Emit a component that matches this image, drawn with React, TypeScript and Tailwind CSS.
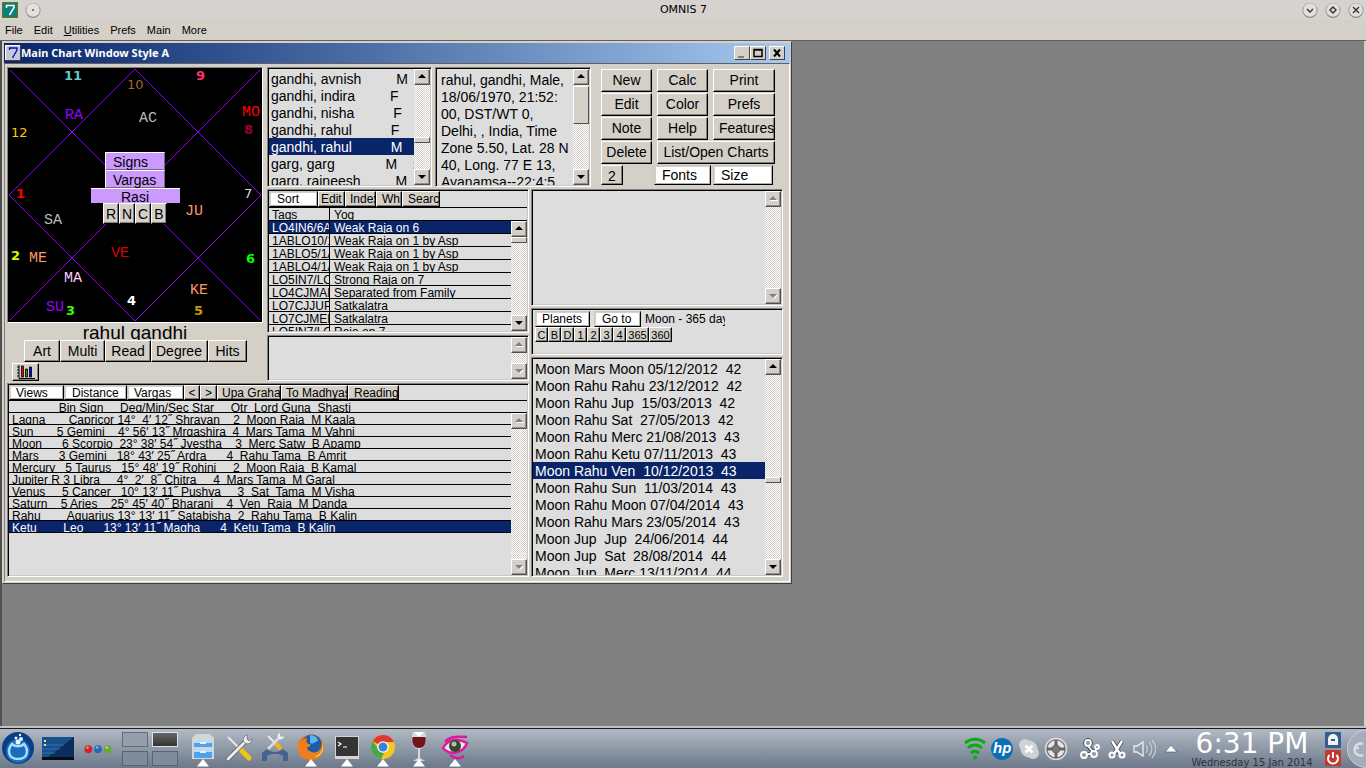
import { type ReactNode } from "react";
import { clsx } from "clsx";

const MENUS = ["File", "Edit", "Utilities", "Prefs", "Main", "More"];

const PEOPLE = [
  "gandhi, avnish         M",
  "gandhi, indira         F",
  "gandhi, nisha          F",
  "gandhi, rahul          F",
  "gandhi, rahul          M",
  "garg, garg             M    :",
  "garg, rajneesh         M"
];

const DETAILS = [
  "rahul, gandhi, Male,",
  "18/06/1970, 21:52:",
  "00, DST/WT 0,",
  "Delhi, , India, Time",
  "Zone 5.50, Lat. 28 N",
  "40, Long. 77 E 13,",
  "Ayanamsa--22:4:5"
];

const YOGAS = [
  ["LO4IN6/6A", "Weak Raja on 6"],
  ["1ABLO10/1", "Weak Raja on 1 by Asp"],
  ["1ABLO5/1A", "Weak Raja on 1 by Asp"],
  ["1ABLO4/1A", "Weak Raja on 1 by Asp"],
  ["LO5IN7/LO", "Strong Raja on 7"],
  ["LO4CJMAL", "Separated from Family"],
  ["LO7CJJUP", "Satkalatra"],
  ["LO7CJMER", "Satkalatra"],
  ["LO5IN7/LO", "Raja on 7"]
];

const PLANET_HEAD = "              Bin Sign     Deg/Min/Sec Star     Qtr  Lord Guna  Shasti";

const PLANETS = [
  "Lagna       Capricor 14°  4′ 12˝ Shravan    2  Moon Raja  M Kaala",
  "Sun       5 Gemini    4° 56′ 13˝ Mrgashira  4  Mars Tama  M Vahni",
  "Moon      6 Scorpio  23° 38′ 54˝ Jyestha    3  Merc Satw  B Apamp",
  "Mars      3 Gemini   18° 43′ 25˝ Ardra      4  Rahu Tama  B Amrit",
  "Mercury   5 Taurus   15° 48′ 19˝ Rohini     2  Moon Raja  B Kamal",
  "Jupiter R 3 Libra     4°  2′  8˝ Chitra     4  Mars Tama  M Garal",
  "Venus     5 Cancer   10° 13′ 11˝ Pushya     3  Sat  Tama  M Visha",
  "Saturn    5 Aries    25° 45′ 40˝ Bharani    4  Ven  Raja  M Danda",
  "Rahu        Aquarius 13° 13′ 11˝ Satabisha  2  Rahu Tama  B Kalin",
  "Ketu        Leo      13° 13′ 11˝ Magha      4  Ketu Tama  B Kalin"
];

const PERIODS = [
  "Moon Mars Moon 05/12/2012  42",
  "Moon Rahu Rahu 23/12/2012  42",
  "Moon Rahu Jup  15/03/2013  42",
  "Moon Rahu Sat  27/05/2013  42",
  "Moon Rahu Merc 21/08/2013  43",
  "Moon Rahu Ketu 07/11/2013  43",
  "Moon Rahu Ven  10/12/2013  43",
  "Moon Rahu Sun  11/03/2014  43",
  "Moon Rahu Moon 07/04/2014  43",
  "Moon Rahu Mars 23/05/2014  43",
  "Moon Jup  Jup  24/06/2014  44",
  "Moon Jup  Sat  28/08/2014  44",
  "Moon Jup  Merc 13/11/2014  44"
];

const HOUSES = [
  { n: "11", x: 56, y: 12, fill: "#5fc8c8", bold: true },
  { n: "10", x: 119, y: 21, fill: "#a0652a", bold: false },
  { n: "9", x: 188, y: 12, fill: "#ff3366", bold: true },
  { n: "12", x: 3, y: 69, fill: "#ffcc00", bold: false },
  { n: "8", x: 236, y: 66, fill: "#990033", bold: true },
  { n: "1", x: 8, y: 130, fill: "#ff0000", bold: true },
  { n: "7", x: 236, y: 130, fill: "#dddddd", bold: false },
  { n: "2", x: 3, y: 192, fill: "#ccff00", bold: true },
  { n: "6", x: 238, y: 195, fill: "#00ff00", bold: true },
  { n: "3", x: 58, y: 247, fill: "#33ff00", bold: true },
  { n: "4", x: 119, y: 237, fill: "#ffffff", bold: true },
  { n: "5", x: 186, y: 247, fill: "#cc9900", bold: true }
];

const GRAHAS = [
  { n: "RA", x: 57, y: 51, fill: "#9900ff" },
  { n: "AC", x: 131, y: 54, fill: "#bbbbbb" },
  { n: "MO", x: 234, y: 48, fill: "#ff0000" },
  { n: "SA", x: 36, y: 156, fill: "#bbbbbb" },
  { n: "JU", x: 177, y: 147, fill: "#ff9966" },
  { n: "ME", x: 21, y: 194, fill: "#ff9966" },
  { n: "VE", x: 103, y: 189, fill: "#dd0000" },
  { n: "MA", x: 56, y: 214, fill: "#ffccff" },
  { n: "SU", x: 38, y: 243, fill: "#9900ff" },
  { n: "KE", x: 182, y: 226, fill: "#ff9966" }
];

export default function App() {
  return (
    <div className="flex min-h-screen flex-col bg-[#808080] font-['Liberation_Sans',Arial,sans-serif] text-black">
      <TitleBar />
      <nav className="flex h-[21px] items-center gap-[11px] border-b border-[#606060] bg-[#d4d0c8] pl-[5px] text-[11px]">
        {MENUS.map((menu) => (
          <button key={menu} type="button" className="leading-5">
            {menu === "Utilities" ? (
              <>
                <span className="underline">U</span>tilities
              </>
            ) : (
              menu
            )}
          </button>
        ))}
      </nav>
      <main className="flex-1 border-r-2 border-l-2 border-r-[#d4d0c8] border-l-[#505050]">
        <ChartWindow />
      </main>
      <Taskbar />
    </div>
  );
}

function TitleBar() {
  return (
    <header className="flex h-5 items-center bg-[#d6d2d0] px-[2px]">
      <svg viewBox="0 0 16 16" className="h-4 w-4">
        <rect width="16" height="16" fill="#7a7000" />
        <rect x="1" y="1" width="14" height="14" fill="#0a7f7c" />
        <path d="M4.500 6V3.500H12v2L7.500 13" fill="none" stroke="#fff" strokeWidth="1.500" />
      </svg>
      <RoundButton label="Window menu" className="ml-[7px]">
        <circle cx="8" cy="8" r="1" fill="#555" />
      </RoundButton>
      <h1 className="flex-1 pl-6 text-center font-['DejaVu_Sans',sans-serif] text-[11px]">OMNIS 7</h1>
      <div className="flex gap-[7px]">
        <RoundButton label="Minimize">
          <path d="M5 7l3 3 3-3" fill="none" stroke="#333" strokeWidth="1.400" />
        </RoundButton>
        <RoundButton label="Restore">
          <path d="M8 5l3 3-3 3-3-3z" fill="none" stroke="#333" strokeWidth="1.400" />
        </RoundButton>
        <RoundButton label="Close">
          <path d="M5 5l6 6M11 5l-6 6" stroke="#333" strokeWidth="1.400" />
        </RoundButton>
      </div>
    </header>
  );
}

function RoundButton({ label, className, children }: { label: string; className?: string; children: ReactNode }) {
  return (
    <button type="button" aria-label={label} className={className}>
      <svg viewBox="0 0 16 16" className="h-4 w-4">
        <circle cx="8" cy="8.500" r="7.500" fill="#8a8785" />
        <circle cx="8" cy="8" r="6.800" fill="#e2dfdd" />
        {children}
      </svg>
    </button>
  );
}

function ChartWindow() {
  return (
    <section className="w-[790px] border border-t-[#d4d0c8] border-r-[#404040] border-b-[#404040] border-l-[#d4d0c8] bg-[#d4d0c8] p-px">
      <div className="flex h-5 items-center bg-linear-to-r from-[#0a246a] to-[#a6caf0] pr-[5px] pl-px">
        <svg viewBox="0 0 16 16" className="h-4 w-4">
          <rect width="16" height="16" fill="#404040" />
          <rect width="15" height="15" fill="#fff" />
          <rect x="1" y="1" width="14" height="14" fill="#c8c8d0" />
          <path d="M4.500 5V3H12v2L7.500 13" fill="none" stroke="#0000dd" strokeWidth="1.300" />
        </svg>
        <h2 className="flex-1 font-['Noto_Sans',sans-serif] text-[11px] font-bold text-white">Main Chart Window Style A</h2>
        <CaptionButton label="Minimize">
          <path d="M3 9h6v2H3z" fill="#808080" />
        </CaptionButton>
        <CaptionButton label="Maximize">
          <path d="M3 2.500h8v7H3zM3 3h8" fill="none" stroke="#000" strokeWidth="1.500" />
        </CaptionButton>
        <CaptionButton label="Close" className="ml-[3px]">
          <path d="M4 2.500l6 7M10 2.500l-6 7" stroke="#000" strokeWidth="2" />
        </CaptionButton>
      </div>
      <div className="border border-t-[#606060] border-r-white border-b-white border-l-[#808080] pt-[3px] pb-1 pl-[2px]">
        <div className="grid grid-cols-[258px_166px_94px_60px_190px] grid-rows-[120px_192px_194px] gap-[2px]">
          <div className="row-span-2 pr-[2px]">
            <BirthChart />
          </div>
          <Panel className="mr-px flex">
            <ListBox label="People" rows={PEOPLE} selected={4} />
            <ScrollBar thumb="mt-[52px] h-[6px]" />
          </Panel>
          <Panel className="col-span-2 flex">
            <div className="min-w-0 flex-1 overflow-hidden pt-[3px] pl-[4px] text-[14px] leading-[17px] whitespace-pre">
              {DETAILS.map((line) => (
                <div key={line}>{line}</div>
              ))}
            </div>
            <ScrollBar thumb="mt-px h-[38px]" />
          </Panel>
          <Commands />
          <div className="col-span-2 flex flex-col gap-[2px]">
            <YogaTable />
            <Panel className="flex h-[46px] justify-end">
              <ScrollBar disabled />
            </Panel>
          </div>
          <div className="col-span-2 row-span-2 flex flex-col gap-[2px]">
            <Panel className="flex h-[117px] justify-end">
              <ScrollBar disabled />
            </Panel>
            <PeriodControls />
            <Panel className="flex min-h-0 flex-1">
              <ListBox label="Periods" rows={PERIODS} selected={6} />
              <ScrollBar thumb="mt-[102px] h-[6px]" />
            </Panel>
          </div>
          <PlanetTable />
        </div>
      </div>
    </section>
  );
}

function CaptionButton({ label, className, children }: { label: string; className?: string; children: ReactNode }) {
  return (
    <button
      type="button"
      aria-label={label}
      className={clsx(
        "h-[14px] w-4 border border-t-white border-r-[#404040] border-b-[#404040] border-l-white bg-[#d4d0c8]",
        className
      )}
    >
      <svg viewBox="0 0 14 12" className="h-3 w-[14px]">
        {children}
      </svg>
    </button>
  );
}

function Panel({ className, children }: { className?: string; children?: ReactNode }) {
  return (
    <div
      className={clsx(
        "border border-t-[#808080] border-r-white border-b-white border-l-[#808080] bg-[#dddddd] p-px",
        "shadow-[inset_1px_1px_0_#000,inset_-1px_-1px_0_#c8c8c8]",
        className
      )}
    >
      {children}
    </div>
  );
}

function ListBox({ label, rows, selected }: { label: string; rows: string[]; selected: number }) {
  return (
    <ul aria-label={label} className="min-w-0 flex-1 overflow-hidden pt-px text-[14px] leading-[19px] whitespace-pre">
      {rows.map((row, i) => (
        <li key={i} className={clsx("h-[17px] pl-[2px]", i === selected && "bg-[#0a246a] text-white")}>
          {row}
        </li>
      ))}
    </ul>
  );
}

function ScrollBar({ thumb, disabled }: { thumb?: string; disabled?: boolean }) {
  return (
    <div className="flex w-4 shrink-0 flex-col bg-[repeating-conic-gradient(#fff_0_25%,#d4d0c8_0_50%)] bg-[length:2px_2px]">
      <ScrollArrow label="Scroll up" d="M3 8l4-4 4 4z" disabled={disabled} />
      <div className="min-h-0 flex-1">
        {thumb && (
          <div
            className={clsx(
              "border border-t-white border-r-[#505050] border-b-[#505050] border-l-white bg-[#d4d0c8]",
              thumb
            )}
          />
        )}
      </div>
      <ScrollArrow label="Scroll down" d="M3 5l4 4 4-4z" disabled={disabled} />
    </div>
  );
}

function ScrollArrow({ label, d, disabled }: { label: string; d: string; disabled?: boolean }) {
  return (
    <button
      type="button"
      aria-label={label}
      disabled={disabled}
      className="h-4 w-4 shrink-0 border border-t-white border-r-[#505050] border-b-[#505050] border-l-white bg-[#d4d0c8] shadow-[inset_-1px_-1px_0_#909090]"
    >
      <svg viewBox="0 0 14 14" className="h-[14px] w-[14px]">
        {disabled && <path d={d} fill="#fff" transform="translate(1 1)" />}
        <path d={d} fill={disabled ? "#808080" : "#000"} />
      </svg>
    </button>
  );
}

// Raised grey button; children are clipped at its edge like the native control.
function Button({ className, children }: { className?: string; children: ReactNode }) {
  return (
    <button
      type="button"
      className={clsx(
        "overflow-hidden border border-t-white border-r-black border-b-black border-l-white bg-[#d4d0c8]",
        "whitespace-nowrap shadow-[inset_-1px_-1px_0_#808080]",
        className
      )}
    >
      {children}
    </button>
  );
}

function PopupButton({ className, children }: { className?: string; children: ReactNode }) {
  return (
    <button
      type="button"
      aria-haspopup="menu"
      className={clsx(
        "overflow-hidden border border-t-[#c8c8c8] border-r-black border-b-black border-l-[#c8c8c8] bg-white text-left",
        "whitespace-nowrap shadow-[inset_1px_1px_0_#d4d0c8,inset_-1px_-1px_0_#b0b0b0]",
        className
      )}
    >
      {children}
    </button>
  );
}

function BirthChart() {
  return (
    <>
      <div className="relative border border-t-[#808080] border-r-white border-b-white border-l-[#808080] bg-black">
        <svg viewBox="0 0 254 254" className="block h-[254px] w-full">
          <g fill="none" stroke="#9100ff" shapeRendering="crispEdges">
            <path d="M2 2l250 250M252 2L2 252" />
            <path d="M127 1l126 126-126 126L1 127z" />
          </g>
          <g fontFamily="DejaVu Sans" fontSize="13">
            {HOUSES.map((h) => (
              <text key={h.n} x={h.x} y={h.y} fill={h.fill} fontWeight={h.bold ? 700 : 400}>
                {h.n}
              </text>
            ))}
          </g>
          <g fontFamily="Liberation Mono" fontSize="15">
            {GRAHAS.map((g) => (
              <text key={g.n} x={g.x} y={g.y} fill={g.fill}>
                {g.n}
              </text>
            ))}
          </g>
        </svg>
        <div className="absolute inset-x-0 top-[84px] flex flex-col items-center text-[14px]">
          <button
            type="button"
            className="h-[18px] w-[60px] border border-t-white border-r-[#707070] border-b-[#707070] border-l-white bg-[#cc99ff] pl-[7px] text-left leading-[18px]"
          >
            Signs
          </button>
          <button
            type="button"
            className="h-[18px] w-[60px] border border-t-white border-r-[#707070] border-b-[#707070] border-l-white bg-[#cc99ff] pl-[7px] text-left leading-[18px]"
          >
            Vargas
          </button>
          <div className="h-[15px] w-[89px] overflow-hidden border-t border-white bg-[#cc99ff] text-center leading-[17px]">Rasi</div>
          <div className="flex">
            {["R", "N", "C", "B"].map((key) => (
              <Button key={key} className="h-[21px] w-4">
                {key}
              </Button>
            ))}
          </div>
        </div>
      </div>
      <div className="h-[17px] overflow-hidden text-center text-[19px] leading-[19px]">rahul gandhi</div>
      <div className="flex pl-[17px] text-[14px]">
        <Button className="h-[22px] w-9">Art</Button>
        <Button className="h-[22px] w-[45px]">Multi</Button>
        <Button className="h-[22px] w-[46px]">Read</Button>
        <Button className="h-[22px] w-[57px] pl-1 text-left">Degree</Button>
        <Button className="h-[22px] w-[39px]">Hits</Button>
      </div>
      <div className="flex pt-px pl-[5px]">
        <button
          type="button"
          aria-label="Graph"
          className="h-[18px] w-[27px] border border-t-white border-r-black border-b-black border-l-white bg-[#d4d0c8] shadow-[inset_-1px_-1px_0_#808080]"
        >
          <svg viewBox="0 0 20 14" className="mx-auto h-[14px] w-5">
            <path d="M3 0v13.500h16M1 2h2M1 5h2M1 8h2M1 11h2" fill="none" stroke="#000" />
            <path d="M5.500 1h2v11h-2z" fill="#f00" stroke="#000" strokeWidth="0.800" />
            <path d="M9.500 4h2v8h-2z" fill="#0a0" stroke="#000" strokeWidth="0.800" />
            <path d="M13.500 2h2v10h-2z" fill="#00f" stroke="#000" strokeWidth="0.800" />
          </svg>
        </button>
      </div>
    </>
  );
}

function Commands() {
  return (
    <div className="flex flex-col gap-px px-2 pt-[2px] text-[14px]">
      <div className="grid grid-cols-[51px_51px_62px] gap-x-[5px] gap-y-px">
        <Button className="h-[23px]">New</Button>
        <Button className="h-[23px]">Calc</Button>
        <Button className="h-[23px]">Print</Button>
        <Button className="h-[23px]">Edit</Button>
        <Button className="h-[23px]">Color</Button>
        <Button className="h-[23px]">Prefs</Button>
        <Button className="h-[23px]">Note</Button>
        <Button className="h-[23px]">Help</Button>
        <Button className="h-[23px] pl-[5px] text-left">Features</Button>
        <Button className="h-[23px]">Delete</Button>
        <Button className="col-span-2 h-[23px]">List/Open Charts</Button>
      </div>
      <div className="flex items-end gap-[2px] pr-[2px]">
        <Button className="mr-auto h-5 w-[22px]">2</Button>
        <PopupButton className="h-5 w-[57px] pl-[7px] leading-[19px]">Fonts</PopupButton>
        <PopupButton className="h-5 w-[60px] pl-[7px] leading-[19px]">Size</PopupButton>
      </div>
    </div>
  );
}

function YogaTable() {
  return (
    <Panel className="flex h-[144px] flex-col text-[12px]">
      <div className="flex h-[17px] shrink-0 border-b border-black leading-[15px]">
        <PopupButton className="w-[49px] pl-[7px]">Sort</PopupButton>
        <Button className="w-[27px] pl-[2px] text-left">Edit</Button>
        <Button className="w-[31px] pl-1 text-left">Index</Button>
        <Button className="w-[26px] pl-[5px] text-left">Wh</Button>
        <Button className="w-[38px] pl-[5px] text-left">Search</Button>
      </div>
      <div className="flex min-h-0 flex-1 overflow-hidden">
        <div className="min-w-0 flex-1 overflow-hidden">
          <table className="w-full table-fixed border-separate border-spacing-0 text-left leading-[14px] whitespace-nowrap">
            <thead>
              <tr>
                <th className="w-[61px] border-r border-b border-black p-0 font-normal">
                  <div className="h-3 overflow-hidden pl-[3px]">Tags</div>
                </th>
                <th className="border-b border-black p-0 font-normal">
                  <div className="h-3 overflow-hidden pl-1">Yog</div>
                </th>
              </tr>
            </thead>
            <tbody>
              {YOGAS.map(([tag, name], i) => (
                <tr key={i} className={clsx(i === 0 && "bg-[#0a246a] text-white")}>
                  <td className="border-r border-b border-black p-0">
                    <div className="h-3 overflow-hidden pl-[3px]">{tag}</div>
                  </td>
                  <td className="border-b border-black p-0">
                    <div className="h-3 overflow-hidden pl-1">{name}</div>
                  </td>
                </tr>
              ))}
            </tbody>
          </table>
        </div>
        <div className="flex w-4 flex-col">
          <div className="h-[13px] shrink-0 border-b border-black" />
          <div className="flex min-h-0 flex-1">
            <ScrollBar thumb="h-[6px]" />
          </div>
        </div>
      </div>
    </Panel>
  );
}

function PlanetTable() {
  return (
    <Panel className="col-span-3 flex flex-col text-[12px]">
      <div className="flex h-4 shrink-0 border-b border-black leading-[14px]">
        <PopupButton className="w-[55px] pl-[6px]">Views</PopupButton>
        <PopupButton className="w-[63px] pl-[7px]">Distance</PopupButton>
        <PopupButton className="w-[57px] pl-[6px]">Vargas</PopupButton>
        <Button className="w-4">&lt;</Button>
        <Button className="w-[17px]">&gt;</Button>
        <Button className="w-16 pl-1 text-left">Upa Grahas</Button>
        <Button className="w-[67px] pl-1 text-left">To Madhyas</Button>
        <Button className="w-[51px] pl-[5px] text-left">Readings</Button>
      </div>
      <div className="flex min-h-0 flex-1">
        <div className="min-w-0 flex-1 overflow-hidden">
          <table className="w-full table-fixed border-separate border-spacing-0 text-left leading-[14px] whitespace-pre">
            <thead>
              <tr>
                <th className="border-b border-black p-0 font-normal">
                  <div className="h-[11px] overflow-hidden pl-[3px]">{PLANET_HEAD}</div>
                </th>
              </tr>
            </thead>
            <tbody>
              {PLANETS.map((row, i) => (
                <tr key={i} className={clsx(i === PLANETS.length - 1 && "bg-[#0a246a] text-white")}>
                  <td className="border-b border-black p-0">
                    <div className="h-[11px] overflow-hidden pl-[3px]">{row}</div>
                  </td>
                </tr>
              ))}
            </tbody>
          </table>
        </div>
        <div className="flex w-4 flex-col">
          <div className="h-3 shrink-0 border-b border-black" />
          <div className="flex min-h-0 flex-1">
            <ScrollBar disabled />
          </div>
        </div>
      </div>
    </Panel>
  );
}

function PeriodControls() {
  return (
    <Panel className="h-[47px] pt-[2px] pl-[3px] text-[12px]">
      <div className="flex h-4 gap-1 leading-[15px]">
        <PopupButton className="w-[55px] pl-[6px]">Planets</PopupButton>
        <PopupButton className="w-[47px] pl-[7px]">Go to</PopupButton>
        <div className="w-20 overflow-hidden leading-[17px] whitespace-nowrap">Moon - 365 days</div>
      </div>
      <div className="flex text-[11px] leading-[15px]">
        {["C", "B", "D", "1", "2", "3", "4"].map((key) => (
          <Button key={key} className="h-[15px] w-[13px]">
            {key}
          </Button>
        ))}
        <Button className="h-[15px] w-[23px]">365</Button>
        <Button className="h-[15px] w-[23px]">360</Button>
      </div>
    </Panel>
  );
}

function Taskbar() {
  return (
    <footer className="border-t-2 border-[#c4c0b8]">
      <div className="flex h-10 items-center border-t border-[#101c30] bg-linear-to-b from-[#b2bac4] to-[#6c798a] pl-[2px]">
        <Launcher label="Menu" className="w-8">
          <circle cx="16" cy="17" r="16" fill="#0b3f83" />
          <circle cx="16" cy="20" r="12" fill="#1b6cb8" />
          <path d="M10 13c-5 6-4 15 6 15s11-9 6-15c-3 3-9 3-12 0z" fill="none" stroke="#a9dcff" strokeWidth="2.500" />
          <g fill="#e8f8ff">
            <circle cx="16" cy="11" r="2.500" />
            <circle cx="19" cy="8" r="2" />
            <circle cx="14" cy="7" r="1.500" />
            <circle cx="18" cy="4" r="1.200" />
          </g>
        </Launcher>
        <Launcher label="Show desktop" className="ml-2 w-8">
          <path d="M0 6h32v23H0z" fill="#17508a" />
          <path d="M32 6v20H6z" fill="#0b2c5c" />
          <path d="M0 14h22M0 18h18M0 22h13" stroke="#3d7cb4" strokeWidth="0.700" />
          <path d="M0 26h32v3H0z" fill="#0a0d14" />
          <path d="M2 9h2v2H2zM2 13h2v2H2z" fill="#e8e0a0" />
        </Launcher>
        <Launcher label="Activities" className="ml-[10px] w-7">
          <circle cx="5" cy="18.500" r="4.500" fill="#d3202a" />
          <circle cx="16" cy="18.500" r="4.500" fill="#2869b8" />
          <circle cx="27" cy="18.500" r="4.500" fill="#6ba82a" />
          <g fill="#fff" opacity="0.500">
            <circle cx="4" cy="16.500" r="1.500" />
            <circle cx="15" cy="16.500" r="1.500" />
            <circle cx="26" cy="16.500" r="1.500" />
          </g>
        </Launcher>
        <div className="ml-[10px] grid grid-cols-[26px_26px] gap-1">
          <button type="button" aria-label="Desktop 1" className="h-[15px] border border-[#626d7c] bg-[#959fac]" />
          <button type="button" aria-label="Desktop 2" className="h-[15px] border border-[#e0e0e0] bg-linear-to-b from-[#686868] to-[#333]" />
          <button type="button" aria-label="Desktop 3" className="h-[15px] border border-[#586473] bg-[#808c9b]" />
          <button type="button" aria-label="Desktop 4" className="h-[15px] border border-[#586473] bg-[#808c9b]" />
        </div>
        <Launcher label="Files" className="ml-[9px] w-8" running>
          <path d="M5 7l4-4h14l4 4v21H5z" fill="#d3d6d3" />
          <path d="M7 9h18v7H7zM7 18h18v9H7z" fill="#4ba3ee" />
          <path d="M7 9h18v3H7zM7 18h18v3H7z" fill="#b5dcfa" />
          <path d="M13 11h6v2h-6zM13 20h6v2h-6z" fill="#eee" />
        </Launcher>
        <Launcher label="Settings" className="ml-[4px] w-8">
          <path d="M16 17l10 10" stroke="#f3c40f" strokeWidth="5" strokeLinecap="round" />
          <path d="M5 6l12 12" stroke="#e9e9e9" strokeWidth="2" />
          <path d="M5 28L22 11" stroke="#555" strokeWidth="4.500" strokeLinecap="round" />
          <path d="M5 28L22 11" stroke="#eee" strokeWidth="3" strokeLinecap="round" />
          <path d="M24 4c-4 1-5 6-2 8s7 0 7-4l-3 2-2-2z" fill="#eee" stroke="#666" strokeWidth="0.700" />
        </Launcher>
        <Launcher label="Tools" className="ml-[4px] w-8">
          <path d="M3 30v-8l5-4c5 4 11 4 16 0l5 4v8h-5v-5c-5-3-11-3-16 0v5z" fill="#456391" />
          <path d="M9 5l7 7" stroke="#e9e9e9" strokeWidth="2" />
          <path d="M16 12l6 6" stroke="#f3b31a" strokeWidth="4" />
          <path d="M9 18L20 7" stroke="#ddd" strokeWidth="2.500" />
          <path d="M21 2c-3 1-3 5-1 6s5 0 5-3l-2 1-2-1z" fill="#eee" />
        </Launcher>
        <Launcher label="Firefox" className="ml-[4px] w-8" running>
          <circle cx="16" cy="16" r="12.500" fill="#e2661a" />
          <circle cx="17" cy="13" r="9.500" fill="#1f5ca8" />
          <path d="M15 4c5 0 8 3 8 6-3 0-4 4-8 2z" fill="#58b6e8" />
          <path d="M5 7c-6 12 0 22 11 22 9 0 14-8 12-17-1 7-6 11-11 9-4-1-5-3-5-5 3 0 4-2 3-3-4 0-4-3-3-6-3 0-4 2-5 3z" fill="#ef7e1e" />
          <path d="M27 10c2 9-2 15-9 16 7 1 13-6 9-16z" fill="#ffd24a" />
        </Launcher>
        <Launcher label="Terminal" className="ml-[4px] w-8" running>
          <path d="M4 5h24v23H4z" fill="#d5d5d3" />
          <path d="M5 6h22v19H5z" fill="#343434" />
          <path d="M7 11l3 2-3 2M12 16h4" fill="none" stroke="#fff" strokeWidth="1.200" />
        </Launcher>
        <Launcher label="Chrome" className="ml-[4px] w-8" running>
          <circle cx="16" cy="16" r="12" fill="#f6c71d" />
          <path d="M5.600 10A12 12 0 0 1 27 11H16v5z" fill="#dd3b2f" />
          <path d="M5.600 10L12 19l5 3-3 6A12 12 0 0 1 5.600 10z" fill="#4aa84a" />
          <circle cx="16" cy="16" r="5.800" fill="#fff" />
          <circle cx="16" cy="16" r="4.500" fill="#3c7fd6" />
        </Launcher>
        <Launcher label="Wine" className="ml-[4px] w-8" running>
          <path d="M10 1h12c3 10 0 16-5 17v9l5 3H10l5-3v-9C10 17 7 11 10 1z" fill="#d9d9dd" />
          <path d="M9.500 6h13c1 6-1 11-6.500 11S8.500 12 9.500 6z" fill="#6e1520" />
          <path d="M11 1h10l-5 5z" fill="#fff" />
        </Launcher>
        <Launcher label="Okular" className="ml-[4px] w-8" running>
          <path d="M4 17C9 8 19 7 28 12c-3 9-16 14-24 5z" fill="#f0e8ee" stroke="#d91c9c" strokeWidth="2.500" />
          <circle cx="16" cy="15" r="6" fill="#38442e" />
          <circle cx="15" cy="13" r="2.500" fill="#b2c497" />
          <path d="M6 11C12 4 20 6 28 6M11 24c5 4 10 4 14 1" fill="none" stroke="#d91c9c" strokeWidth="2.500" />
        </Launcher>
        <Tray />
      </div>
    </footer>
  );
}

function Launcher({
  label,
  className,
  running,
  children
}: {
  label: string;
  className: string;
  running?: boolean;
  children: ReactNode;
}) {
  return (
    <button type="button" aria-label={label} className={clsx("shrink-0", className)}>
      <svg viewBox="0 0 32 36" className="block w-full">
        {children}
        {running && <path d="M16 28l6 7.500H10z" fill="#fff" />}
      </svg>
    </button>
  );
}

function TrayIcon({ label, children }: { label: string; children: ReactNode }) {
  return (
    <button type="button" aria-label={label} className="w-6 shrink-0">
      <svg viewBox="0 0 24 24" className="block w-full">
        {children}
      </svg>
    </button>
  );
}

function Tray() {
  return (
    <div className="ml-auto flex items-center">
      <div className="flex items-center gap-[3px]">
        <TrayIcon label="Wireless">
          <path d="M2 6c6-5 14-5 20 0M5 11c4-4 10-4 14 0M8 16c3-2.500 5-2.500 8 0" fill="none" stroke="#0caa13" strokeWidth="3" />
          <circle cx="12" cy="20.500" r="2" fill="#0caa13" />
        </TrayIcon>
        <TrayIcon label="Printer">
          <circle cx="12" cy="12" r="11" fill="#0970b8" />
          <text x="3" y="16" fontFamily="Liberation Sans" fontSize="15" fontStyle="italic" fontWeight="700" fill="#fff">
            hp
          </text>
        </TrayIcon>
        <TrayIcon label="Skype">
          <circle cx="8" cy="8" r="6" fill="#cfd2d4" />
          <circle cx="16" cy="16" r="6" fill="#cfd2d4" />
          <circle cx="12" cy="12" r="8.500" fill="#cfd2d4" />
          <path d="M8.500 8.500l7 7M15.500 8.500l-7 7" stroke="#fff" strokeWidth="2.500" />
        </TrayIcon>
        <TrayIcon label="Network">
          <circle cx="12" cy="12" r="10.500" fill="#777" stroke="#ddd" strokeWidth="1.500" />
          <circle cx="12" cy="12" r="6.500" fill="none" stroke="#e8e8e8" strokeWidth="4" />
          <path d="M12 3v6M12 15v6M3 12h6M15 12h6" stroke="#666" strokeWidth="3" />
        </TrayIcon>
        <div className="w-1" />
        <TrayIcon label="Nepomuk">
          <g fill="none" stroke="#333b45" strokeWidth="3.500">
            <circle cx="10" cy="6" r="3" />
            <path d="M10 9l6 7-9 2M16 16l3-5" />
          </g>
          <g fill="#8e99a6" stroke="#fff" strokeWidth="1.800">
            <path d="M10 9l6 7-9 2M16 16l3-5" fill="none" />
            <circle cx="10" cy="6" r="3" />
            <circle cx="6" cy="18" r="3" />
            <circle cx="16" cy="17" r="3" />
            <circle cx="19" cy="10" r="2" />
          </g>
        </TrayIcon>
        <TrayIcon label="Clipboard">
          <path d="M7 4l8 13M17 4L9 17" stroke="#39424d" strokeWidth="4" />
          <path d="M7 4l8 13M17 4L9 17" stroke="#fff" strokeWidth="2.500" />
          <circle cx="7" cy="18" r="2.500" fill="none" stroke="#fff" strokeWidth="2" />
          <circle cx="17" cy="18" r="2.500" fill="none" stroke="#fff" strokeWidth="2" />
        </TrayIcon>
        <TrayIcon label="Volume">
          <path d="M2 9h3l6-4v14l-6-4H2z" fill="none" stroke="#eee" strokeWidth="1.300" />
          <path d="M14 8c2 3 2 5 0 8M17 5c4 5 4 9 0 14M20 3c5 6 5 12 0 18" fill="none" stroke="#c3c9d0" strokeWidth="1.300" />
        </TrayIcon>
        <TrayIcon label="Show hidden icons">
          <path d="M6 15l6-7 6 7z" fill="#fff" stroke="#525d6a" strokeWidth="0.700" />
        </TrayIcon>
      </div>
      <div className="ml-2 flex w-[122px] flex-col items-center font-['DejaVu_Sans',sans-serif] whitespace-nowrap">
        <div className="text-[28px] leading-[28px] text-white">6:31 PM</div>
        <div className="text-[10px] leading-[10px] text-[#2c333b]">Wednesday 15 Jan 2014</div>
      </div>
      <div className="ml-3 flex flex-col gap-[2px]">
        <button type="button" aria-label="Lock screen">
          <svg viewBox="0 0 16 16" className="block h-4 w-4">
            <rect width="16" height="16" rx="1" fill="#345c91" />
            <path d="M3 13V7a5 5 0 0 1 10 0v6z" fill="#f2f2f2" />
            <path d="M6 7h4v2H6z" fill="#345c91" />
          </svg>
        </button>
        <button type="button" aria-label="Shut down">
          <svg viewBox="0 0 16 16" className="block h-4 w-4">
            <rect width="16" height="16" rx="1" fill="#c7372d" />
            <path d="M4.500 5a5 5 0 1 0 7 0M8 2v6" fill="none" stroke="#fff" strokeWidth="2" />
          </svg>
        </button>
      </div>
      <button type="button" aria-label="Panel toolbox" className="ml-[5px]">
        <svg viewBox="0 0 20 38" className="block h-[38px] w-5">
          <circle cx="20" cy="19" r="18.500" fill="#a4adb9" stroke="#c9cfd6" />
          <path d="M17 14a6 6 0 1 0 0 11M8 18h5" fill="none" stroke="#d9dde2" strokeWidth="2.500" />
        </svg>
      </button>
    </div>
  );
}
